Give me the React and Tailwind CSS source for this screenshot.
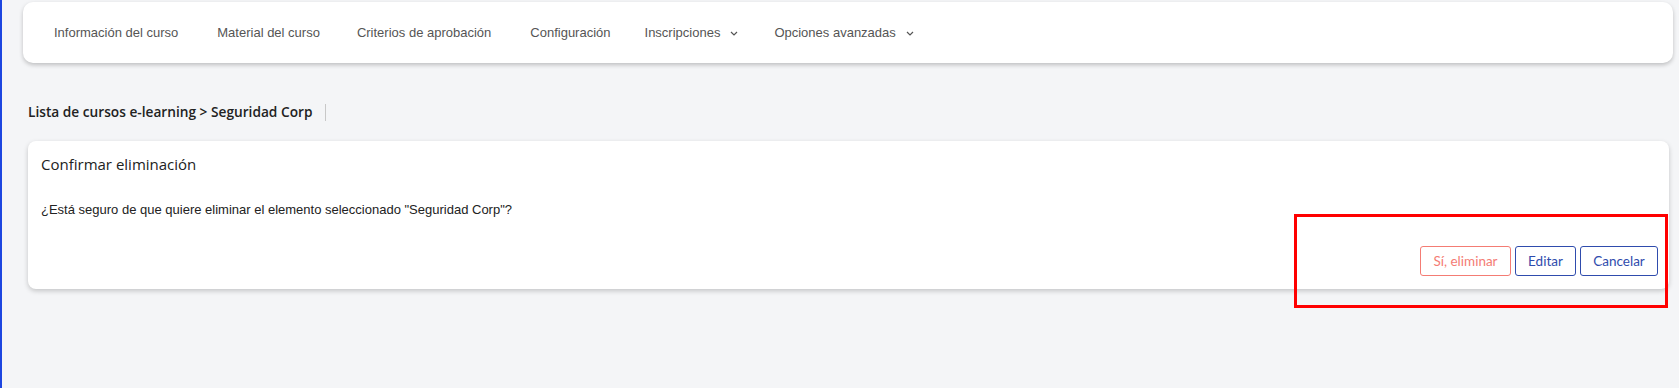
import React from 'react';

const NAV_ITEMS = [
  { label: 'Información del curso', gap: 'ml-0' },
  { label: 'Material del curso', gap: 'ml-[39px]' },
  { label: 'Criterios de aprobación', gap: 'ml-[37px]' },
  { label: 'Configuración', gap: 'ml-[39px]' },
  { label: 'Inscripciones', gap: 'ml-[34px]', dropdown: true },
  { label: 'Opciones avanzadas', gap: 'ml-[36px]', dropdown: true },
];

function Chevron() {
  return (
    <svg width="8" height="5" viewBox="0 0 8 5" className="ml-[10px] mt-[2px]">
      <path d="M1 1 L4 4 L7 1" fill="none" stroke="#555" strokeWidth="1.2" />
    </svg>
  );
}

export default function App() {
  return (
    <div className="relative h-[388px] bg-[#f4f5f7] border-l-2 border-[#1d46e0] font-['Lato',sans-serif]">
      {/* Tabs */}
      <div className="pt-[2px] pl-[21px] pr-[6px]">
        <nav className="h-[61px] bg-white rounded-[10px] shadow-[0_2px_4px_rgba(0,0,0,0.22)] flex items-center pl-[31px]">
          {NAV_ITEMS.map((it, i) => (
            <div key={i} className={`${it.gap} flex items-center text-[13px] text-[#555] font-['Liberation_Sans',sans-serif]`}>
              {it.label}
              {it.dropdown && <Chevron />}
            </div>
          ))}
        </nav>
      </div>

      {/* Breadcrumb */}
      <div className="pl-[26px] mt-[40px] flex items-center h-[18px]">
        <span className="text-[13.7px] font-semibold text-[#222] font-['Open_Sans',sans-serif]">Lista de cursos e-learning &gt; Seguridad Corp</span>
        <span className="ml-[13px] w-px h-[17px] bg-[#c8c8c8]" />
      </div>

      {/* Confirm card */}
      <div className="ml-[26px] mr-[10px] mt-[20px] h-[148px] bg-white rounded-[8px] shadow-[0_2px_5px_rgba(0,0,0,0.2)] flex flex-col px-[13px]">
        <h2 className="mt-[13px] text-[15px] text-[#222] leading-[20px] font-['Open_Sans',sans-serif]">Confirmar eliminación</h2>
        <p className="mt-[27px] text-[13px] text-[#222] leading-[18px] font-['Liberation_Sans',sans-serif]">
          ¿Está seguro de que quiere eliminar el elemento seleccionado "Seguridad Corp"?
        </p>
        <div className="mt-auto mb-[13px] flex justify-end gap-[4px] mr-[-2px]">
          <button className="h-[30px] w-[91px] rounded-[3px] border border-[#f47c74] text-[#f47c74] text-[13.5px]">Sí, eliminar</button>
          <button className="h-[30px] w-[61px] rounded-[3px] border border-[#2f4cad] text-[#2f4cad] text-[13.5px]">Editar</button>
          <button className="h-[30px] w-[78px] rounded-[3px] border border-[#2f4cad] text-[#2f4cad] text-[13.5px]">Cancelar</button>
        </div>
      </div>

      {/* Annotation highlight */}
      <div className="absolute left-[1292px] top-[214px] w-[374px] h-[94px] border-[3px] border-[#ff0000] pointer-events-none" />
    </div>
  );
}
